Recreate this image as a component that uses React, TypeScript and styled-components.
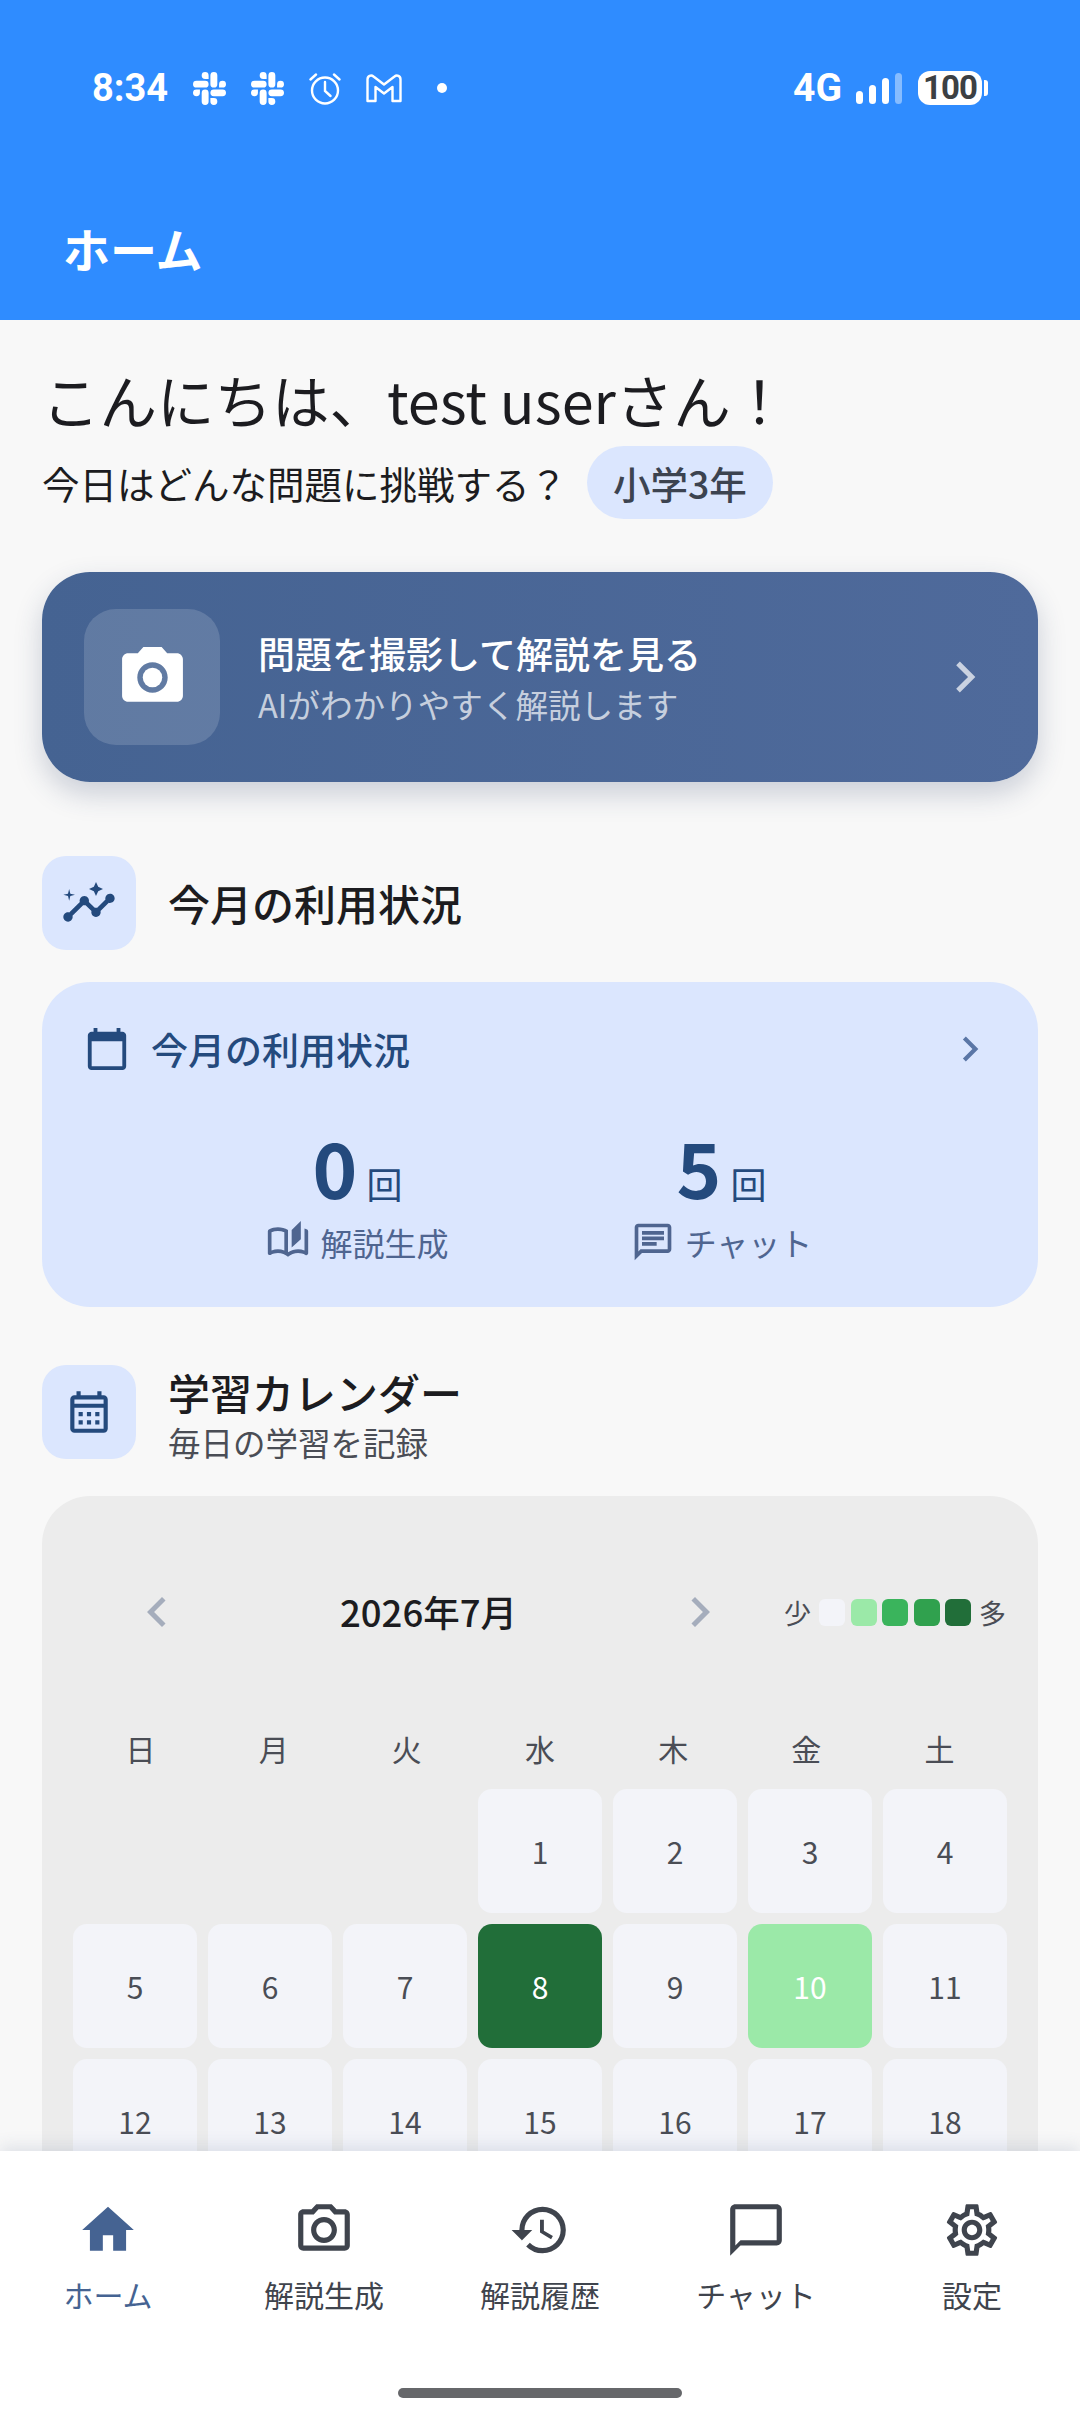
import styled, { createGlobalStyle } from 'styled-components';
import {
	MdCalendarToday,
	MdChatBubbleOutline,
	MdChevronLeft,
	MdChevronRight,
	MdHistory,
	MdHome,
	MdInsights,
	MdOutlineAutoStories,
	MdOutlineCalendarMonth,
	MdOutlineChat,
	MdOutlinePhotoCamera,
	MdOutlineSettings,
	MdPhotoCamera,
} from 'react-icons/md';
import { SiSlack } from 'react-icons/si';

const WEEK_DAYS = ['日', '月', '火', '水', '木', '金', '土'];
const LEGEND = ['#f3f4f9', '#9be9a8', '#3ab45c', '#30a14e', '#216e39'];
const ACTIVITY: Record<number, string> = { 8: '#216e39', 10: '#9be9a8' };
const TABS = [
	{ label: 'ホーム', Icon: MdHome, active: true },
	{ label: '解説生成', Icon: MdOutlinePhotoCamera },
	{ label: '解説履歴', Icon: MdHistory },
	{ label: 'チャット', Icon: MdChatBubbleOutline },
	{ label: '設定', Icon: MdOutlineSettings },
];

export default function App() {
	const days = Array.from({ length: 18 }, (_, i) => i + 1);

	return (
		<>
			<GlobalStyle />
			<SScreen>
				<SHeader>
					<SStatusBar>
						<STime>8:34</STime>
						<SSlackIcon />
						<SSlackIcon />
						<svg width='32' height='33' viewBox='0 0 32 33' fill='none' stroke='#fff' strokeWidth='2.4' strokeLinecap='round'>
							<circle cx='16' cy='18.5' r='13' />
							<path d='M16 10v9l5.5 5M1.5 7.5 7 2.5M30.5 7.5 25 2.5' />
						</svg>
						<svg width='36' height='29' viewBox='0 0 36 29' fill='none' stroke='#fff' strokeWidth='2.4' strokeLinejoin='round'>
							<path d='M1.5 5.5v21.5h8V13l8.500 6.500L26.500 13v14h8V5.500c0-3.500-3.500-5-6-3L18 10.500 7.500 2.500c-2.500-2-6-.5-6 3Z' />
						</svg>
						<SStatusDot />
						<SStatusRight>
							<SNetwork>4G</SNetwork>
							<SSignal>
								<SSignalBar $height={13} />
								<SSignalBar $height={19} />
								<SSignalBar $height={26} />
								<SSignalBar $height={31} $dim />
							</SSignal>
							<SBattery>100</SBattery>
							<SBatteryCap />
						</SStatusRight>
					</SStatusBar>
					<SHeaderTitle>ホーム</SHeaderTitle>
				</SHeader>

				<SContent>
					<SGreeting>こんにちは、test userさん！</SGreeting>
					<SSubRow>
						<SSubText>今日はどんな問題に挑戦する？</SSubText>
						<SGradeChip>小学3年</SGradeChip>
					</SSubRow>

					<SCaptureCard>
						<SCaptureTile>
							<MdPhotoCamera size={73} color='#fff' />
						</SCaptureTile>
						<SCaptureText>
							<SCaptureTitle>問題を撮影して解説を見る</SCaptureTitle>
							<SCaptureSub>AIがわかりやすく解説します</SCaptureSub>
						</SCaptureText>
						<MdChevronRight size={62} color='rgba(255,255,255,0.7)' />
					</SCaptureCard>

					<SSectionHead>
						<SSectionTile>
							<MdInsights size={56} color='#244a7d' />
						</SSectionTile>
						<SSectionTitle>今月の利用状況</SSectionTitle>
					</SSectionHead>

					<SUsageCard>
						<SUsageHead>
							<MdCalendarToday size={46} color='#244a7d' />
							<SUsageTitle>今月の利用状況</SUsageTitle>
							<MdChevronRight size={50} color='#5a76a6' />
						</SUsageHead>
						<SUsageGrid>
							<SUsageColumn>
								<SCountRow>
									<SCount>0</SCount>
									<SCountUnit>回</SCountUnit>
								</SCountRow>
								<SCountLabel>
									<MdOutlineAutoStories size={44} />
									解説生成
								</SCountLabel>
							</SUsageColumn>
							<SUsageColumn>
								<SCountRow>
									<SCount>5</SCount>
									<SCountUnit>回</SCountUnit>
								</SCountRow>
								<SCountLabel>
									<MdOutlineChat size={44} />
									チャット
								</SCountLabel>
							</SUsageColumn>
						</SUsageGrid>
					</SUsageCard>

					<SSectionHead $calendar>
						<SSectionTile>
							<MdOutlineCalendarMonth size={50} color='#244a7d' />
						</SSectionTile>
						<div>
							<SSectionTitle>学習カレンダー</SSectionTitle>
							<SSectionSub>毎日の学習を記録</SSectionSub>
						</div>
					</SSectionHead>

					<SCalendarCard>
						<SCalendarHead>
							<SMonthNav>
								<MdChevronLeft size={60} color='#a5adbc' />
								<SMonthTitle>2026年7月</SMonthTitle>
								<MdChevronRight size={60} color='#a5adbc' />
							</SMonthNav>
							<SLegend>
								少
								<SLegendSwatches>
									{LEGEND.map((color) => (
										<SLegendSwatch key={color} $color={color} />
									))}
								</SLegendSwatches>
								多
							</SLegend>
						</SCalendarHead>
						<SWeekRow>
							{WEEK_DAYS.map((day) => (
								<SWeekDay key={day}>{day}</SWeekDay>
							))}
						</SWeekRow>
						<SDayGrid>
							{days.map((day) => (
								<SDayCell key={day} $first={day === 1} $color={ACTIVITY[day]}>
									{day}
								</SDayCell>
							))}
						</SDayGrid>
					</SCalendarCard>
				</SContent>

				<SBottomNav>
					<STabRow>
						{TABS.map(({ label, Icon, active }) => (
							<STab key={label} $active={active}>
								<Icon size={62} />
								<span>{label}</span>
							</STab>
						))}
					</STabRow>
					<SHomeIndicator />
				</SBottomNav>
			</SScreen>
		</>
	);
}

const GlobalStyle = createGlobalStyle`
	html, body {
		margin: 0;
		padding: 0;
		background: #f8f8f8;
	}
	* {
		box-sizing: border-box;
	}
`;

const SScreen = styled.div`
	width: 1080px;
	height: 2424px;
	display: flex;
	flex-direction: column;
	overflow: hidden;
	background: #f8f8f8;
	color: #1c1c20;
	font-family: 'Noto Sans CJK JP', 'Noto Sans', sans-serif;
`;

const SHeader = styled.header`
	flex: none;
	height: 320px;
	padding-top: 71px;
	background: #2f8cff;
	color: #fff;
`;

const SStatusBar = styled.div`
	height: 34px;
	padding: 0 92px 0 92px;
	display: flex;
	align-items: center;
	gap: 25px;
	font-family: Roboto, sans-serif;
	font-weight: 500;
`;

const STime = styled.span`
	width: 76px;
	font-size: 38px;
	font-weight: 700;
	line-height: 34px;
`;

const SSlackIcon = styled(SiSlack)`
	width: 33px;
	height: 33px;
`;

const SStatusDot = styled.span`
	width: 10px;
	height: 10px;
	margin-left: 10px;
	border-radius: 50%;
	background: #fff;
`;

const SStatusRight = styled.div`
	margin-left: auto;
	display: flex;
	align-items: center;
`;

const SNetwork = styled.span`
	font-size: 39px;
	font-weight: 700;
	line-height: 34px;
`;

const SSignal = styled.div`
	margin: 0 16px 0 14px;
	display: flex;
	align-items: flex-end;
	gap: 6px;
`;

const SSignalBar = styled.span<{ $height: number; $dim?: boolean }>`
	width: 7px;
	height: ${(p) => p.$height}px;
	border-radius: 4px;
	background: ${(p) => (p.$dim ? 'rgba(255,255,255,0.42)' : '#fff')};
`;

const SBattery = styled.span`
	width: 64px;
	height: 34px;
	border-radius: 12px;
	background: #fff;
	color: #3c4043;
	font-size: 33px;
	font-weight: 700;
	letter-spacing: -1px;
	line-height: 34px;
	text-align: center;
`;

const SBatteryCap = styled.span`
	width: 4px;
	height: 16px;
	margin-left: 2px;
	border-radius: 0 3px 3px 0;
	background: #fff;
`;

const SHeaderTitle = styled.h1`
	margin: 113px 0 0 63px;
	font-size: 47px;
	font-weight: 700;
	line-height: 60px;
`;

const SContent = styled.main`
	flex: 1;
	min-height: 0;
	overflow: hidden;
	padding: 39px 42px 0;
`;

const SGreeting = styled.div`
	font-size: 57.500px;
	line-height: 80px;
`;

const SSubRow = styled.div`
	margin-top: 7px;
	display: flex;
	align-items: center;
	gap: 20px;
`;

const SSubText = styled.span`
	font-size: 37.500px;
	line-height: 73px;
`;

const SGradeChip = styled.span`
	height: 73px;
	padding: 0 26px;
	border-radius: 37px;
	background: #dbe6fe;
	color: #3c4350;
	font-size: 37.500px;
	font-weight: 500;
	line-height: 73px;
`;

const SCaptureCard = styled.div`
	height: 210px;
	margin-top: 53px;
	padding: 0 42px 0 42px;
	display: flex;
	align-items: center;
	border-radius: 48px;
	background: linear-gradient(90deg, #456392, #4f6a9b);
	box-shadow: 0 12px 28px rgba(40, 60, 100, 0.22);
`;

const SCaptureTile = styled.div`
	width: 136px;
	height: 136px;
	display: flex;
	align-items: center;
	justify-content: center;
	border-radius: 32px;
	background: rgba(255, 255, 255, 0.15);
`;

const SCaptureText = styled.div`
	flex: 1;
	margin-left: 38px;
`;

const SCaptureTitle = styled.div`
	color: #fff;
	font-size: 37px;
	font-weight: 500;
	line-height: 52px;
`;

const SCaptureSub = styled.div`
	color: rgba(255, 255, 255, 0.7);
	font-size: 32.600px;
	line-height: 49px;
`;

const SSectionHead = styled.div<{ $calendar?: boolean }>`
	margin-top: ${(p) => (p.$calendar ? 58 : 74)}px;
	margin-bottom: ${(p) => (p.$calendar ? 37 : 33)}px;
	display: flex;
	align-items: center;
	gap: 32px;
`;

const SSectionTile = styled.div`
	flex: none;
	width: 94px;
	height: 94px;
	display: flex;
	align-items: center;
	justify-content: center;
	border-radius: 24px;
	background: #dbe6fe;
`;

const SSectionTitle = styled.div`
	font-size: 42px;
	font-weight: 500;
	line-height: 54px;
`;

const SSectionSub = styled.div`
	margin-top: 6px;
	color: #4a4d55;
	font-size: 32.500px;
	line-height: 34px;
`;

const SUsageCard = styled.div`
	height: 325px;
	margin-top: -1px;
	padding: 40px 43px 0 42px;
	border-radius: 48px;
	background: #dbe6fe;
`;

const SUsageHead = styled.div`
	display: flex;
	align-items: center;
	gap: 21px;
`;

const SUsageTitle = styled.div`
	flex: 1;
	color: #244a7d;
	font-size: 37px;
	font-weight: 500;
	line-height: 54px;
`;

const SUsageGrid = styled.div`
	margin-top: 45px;
	display: grid;
	grid-template-columns: 364px 364px;
	justify-content: center;
`;

const SUsageColumn = styled.div`
	display: flex;
	flex-direction: column;
	align-items: center;
`;

const SCountRow = styled.div`
	display: flex;
	align-items: baseline;
	gap: 9px;
	color: #244a7d;
`;

const SCount = styled.span`
	font-size: 76px;
	font-weight: 700;
	line-height: 90px;
`;

const SCountUnit = styled.span`
	font-size: 36px;
	line-height: 40px;
`;

const SCountLabel = styled.div`
	margin-top: 9px;
	display: flex;
	align-items: center;
	gap: 10px;
	color: #4f6590;
	font-size: 32px;
	line-height: 44px;
`;

const SCalendarCard = styled.div`
	padding: 86px 32px 0;
	height: 900px;
	border-radius: 48px;
	background: #ececec;
`;

const SCalendarHead = styled.div`
	height: 60px;
	display: flex;
	align-items: center;
`;

const SMonthNav = styled.div`
	width: 603px;
	margin-left: 53px;
	display: flex;
	align-items: center;
	justify-content: space-between;
`;

const SMonthTitle = styled.div`
	font-size: 36.500px;
	font-weight: 500;
	line-height: 60px;
`;

const SLegend = styled.div`
	margin-left: auto;
	display: flex;
	align-items: center;
	gap: 8px;
	color: #4a4d55;
	font-size: 27px;
`;

const SLegendSwatches = styled.div`
	display: flex;
	gap: 5.500px;
`;

const SLegendSwatch = styled.span<{ $color: string }>`
	width: 26px;
	height: 27px;
	border-radius: 6px;
	background: ${(p) => p.$color};
`;

const SWeekRow = styled.div`
	margin-top: 84px;
	display: grid;
	grid-template-columns: repeat(7, 1fr);
`;

const SWeekDay = styled.div`
	color: #4a4d55;
	font-size: 30px;
	line-height: 44px;
	text-align: center;
`;

const SDayGrid = styled.div`
	margin: 19px 0 0 -1px;
	display: grid;
	grid-template-columns: repeat(7, 124px);
	grid-auto-rows: 124px;
	gap: 11px;
`;

const SDayCell = styled.div<{ $first?: boolean; $color?: string }>`
	${(p) => (p.$first ? 'grid-column-start: 4;' : '')}
	display: flex;
	align-items: center;
	justify-content: center;
	border-radius: 14px;
	background: ${(p) => p.$color ?? '#f3f4f9'};
	color: ${(p) => (p.$color ? '#fff' : '#4a4d55')};
	font-size: 30px;
`;

const SBottomNav = styled.nav`
	flex: none;
	height: 273px;
	position: relative;
	display: flex;
	flex-direction: column;
	background: #fff;
	box-shadow: 0 -4px 16px rgba(60, 80, 120, 0.14);
`;

const STabRow = styled.div`
	margin-top: 48px;
	display: grid;
	grid-template-columns: repeat(5, 1fr);
`;

const STab = styled.div<{ $active?: boolean }>`
	display: flex;
	flex-direction: column;
	align-items: center;
	gap: 11px;
	color: ${(p) => (p.$active ? '#456392' : '#3f444d')};
	font-size: 30px;
	line-height: 44px;
`;

const SHomeIndicator = styled.div`
	width: 284px;
	height: 10px;
	margin: auto auto 26px;
	border-radius: 5px;
	background: #66676a;
`;
